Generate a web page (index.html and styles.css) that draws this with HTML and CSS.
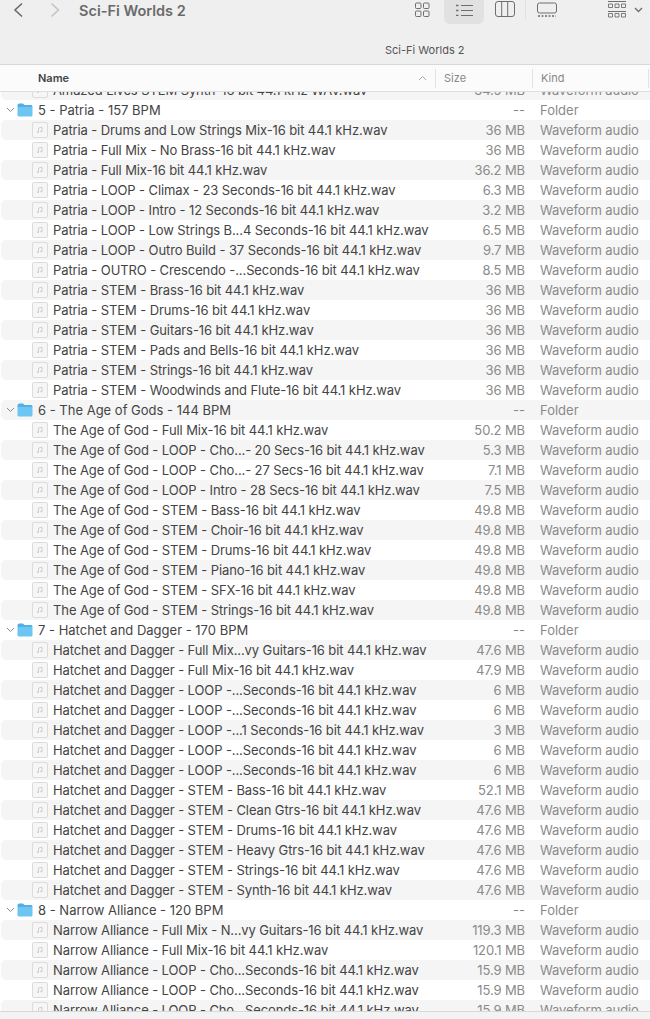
FILE: index.html
```html
<!DOCTYPE html>
<html>
<head>
    <title>Sci-Fi Worlds 2</title>
    <link rel="stylesheet" href="styles.css">
</head>
<body>
    <svg class="defs" width="0" height="0">
        <symbol id="wav" viewBox="0 0 16 16">
            <rect x="0.5" y="0.5" width="15" height="15" rx="1.5" fill="#f6f6f6" stroke="#dcdcdc"/>
            <path d="M6.5 10V6l3.5-.8v4" fill="none" stroke="#cccccc" stroke-width="0.9"/>
            <circle cx="5.8" cy="10.2" r="0.9" fill="#cccccc"/>
            <circle cx="9.3" cy="9.4" r="0.9" fill="#cccccc"/>
        </symbol>
        <symbol id="folder" viewBox="0 0 16 14">
            <path d="M0.5 2.5Q0.5 0.5 2.5 0.5H6L7.5 2H14Q15.5 2 15.5 3.5V4H0.5Z" fill="#4fb0e6"/>
            <path d="M0.5 4H15.5V12Q15.5 13.5 14 13.5H2Q0.5 13.5 0.5 12Z" fill="#6cc5f3"/>
        </symbol>
    </svg>

    <div class="window">
        <div class="toolbar">
            <div class="nav">
                <svg class="chev" width="12" height="18" viewBox="0 0 12 18"><path d="M10 2.5L3 9l7 6.5" fill="none" stroke="#6a6a6a" stroke-width="1.6"/></svg>
                <svg class="chev" width="12" height="18" viewBox="0 0 12 18"><path d="M2.5 2.5L9.5 9l-7 6.5" fill="none" stroke="#c4c4c4" stroke-width="1.6"/></svg>
                <div class="win-title">Sci-Fi Worlds 2</div>
            </div>
            <div class="views">
                <div class="view-btn">
                    <svg width="18" height="17" viewBox="0 0 18 17" fill="none" stroke="#6e6e6e"><rect x="2.5" y="2" width="5.5" height="5.5" rx="1"/><rect x="10.5" y="2" width="5.5" height="5.5" rx="1"/><rect x="2.5" y="10" width="5.5" height="5.5" rx="1"/><rect x="10.5" y="10" width="5.5" height="5.5" rx="1"/></svg>
                </div>
                <div class="view-btn active">
                    <svg width="20" height="14" viewBox="0 0 20 14" fill="none" stroke="#6e6e6e"><path d="M7 3.5H19M7 8.5H19M7 13.5H19"/><path d="M2 3.5h2.5M2 8.5h2.5M2 13.5h2.5" stroke-width="1.5"/></svg>
                </div>
                <div class="view-btn">
                    <svg width="20" height="16" viewBox="0 0 20 16" fill="none" stroke="#6e6e6e"><rect x="0.5" y="0.5" width="19" height="15" rx="2.5"/><path d="M6.7 0.5V15.5M12.7 0.5V15.5"/></svg>
                </div>
                <div class="divider"></div>
                <div class="view-btn">
                    <svg width="20" height="17" viewBox="0 0 20 17" fill="none" stroke="#6e6e6e"><rect x="0.5" y="2" width="19" height="10" rx="2"/><path d="M1 15h18" stroke-dasharray="2 1.5" stroke-width="1.5"/></svg>
                </div>
                <div class="group-btn">
                    <svg width="18" height="18" viewBox="0 0 18 18" fill="none" stroke="#6e6e6e"><path d="M0 1.5H18M0 11.5H18"/><path d="M0.5 4h4v3.5h-4zM7 4h4v3.5H7zM13.5 4h4v3.5h-4zM0.5 13.5h4V17h-4zM7 13.5h4V17H7zM13.5 13.5h4V17h-4z" stroke-width="0.9"/></svg>
                    <svg class="group-caret" width="9" height="6" viewBox="0 0 9 6"><path d="M1 1l3.5 3.5L8 1" fill="none" stroke="#6e6e6e" stroke-width="1.4"/></svg>
                </div>
            </div>
        </div>
        <div class="path-title">Sci-Fi Worlds 2</div>

        <div class="col-head">
            <div class="head-name">Name</div>
            <svg class="sort" width="9" height="6" viewBox="0 0 9 6"><path d="M1 5l3.5-3.5L8 5" fill="none" stroke="#a8a8a8" stroke-width="1"/></svg>
            <div class="head-size">Size</div>
            <div class="head-kind">Kind</div>
        </div>

        <div class="list">
            <div class="list-inner">
                <div class="row"><svg class="ficon"><use href="#wav"/></svg><div class="name">Amazed Lives STEM Synth-16 bit 44.1 kHz WAV.wav</div><div class="size">34.5 MB</div><div class="kind">Waveform audio</div></div>
                <div class="row folder"><svg class="tw" width="9" height="6" viewBox="0 0 9 6"><path d="M1 1l3.5 3.5L8 1" fill="none" stroke="#8c8c8c" stroke-width="1"/></svg><svg class="dicon"><use href="#folder"/></svg><div class="name">5 - Patria - 157 BPM</div><div class="size">--</div><div class="kind">Folder</div></div>
                <div class="row"><svg class="ficon"><use href="#wav"/></svg><div class="name">Patria - Drums and Low Strings Mix-16 bit 44.1 kHz.wav</div><div class="size">36 MB</div><div class="kind">Waveform audio</div></div>
                <div class="row"><svg class="ficon"><use href="#wav"/></svg><div class="name">Patria - Full Mix - No Brass-16 bit 44.1 kHz.wav</div><div class="size">36 MB</div><div class="kind">Waveform audio</div></div>
                <div class="row"><svg class="ficon"><use href="#wav"/></svg><div class="name">Patria - Full Mix-16 bit 44.1 kHz.wav</div><div class="size">36.2 MB</div><div class="kind">Waveform audio</div></div>
                <div class="row"><svg class="ficon"><use href="#wav"/></svg><div class="name">Patria - LOOP - Climax - 23 Seconds-16 bit 44.1 kHz.wav</div><div class="size">6.3 MB</div><div class="kind">Waveform audio</div></div>
                <div class="row"><svg class="ficon"><use href="#wav"/></svg><div class="name">Patria - LOOP - Intro - 12 Seconds-16 bit 44.1 kHz.wav</div><div class="size">3.2 MB</div><div class="kind">Waveform audio</div></div>
                <div class="row"><svg class="ficon"><use href="#wav"/></svg><div class="name">Patria - LOOP - Low Strings B...4 Seconds-16 bit 44.1 kHz.wav</div><div class="size">6.5 MB</div><div class="kind">Waveform audio</div></div>
                <div class="row"><svg class="ficon"><use href="#wav"/></svg><div class="name">Patria - LOOP - Outro Build - 37 Seconds-16 bit 44.1 kHz.wav</div><div class="size">9.7 MB</div><div class="kind">Waveform audio</div></div>
                <div class="row"><svg class="ficon"><use href="#wav"/></svg><div class="name">Patria - OUTRO - Crescendo -...Seconds-16 bit 44.1 kHz.wav</div><div class="size">8.5 MB</div><div class="kind">Waveform audio</div></div>
                <div class="row"><svg class="ficon"><use href="#wav"/></svg><div class="name">Patria - STEM - Brass-16 bit 44.1 kHz.wav</div><div class="size">36 MB</div><div class="kind">Waveform audio</div></div>
                <div class="row"><svg class="ficon"><use href="#wav"/></svg><div class="name">Patria - STEM - Drums-16 bit 44.1 kHz.wav</div><div class="size">36 MB</div><div class="kind">Waveform audio</div></div>
                <div class="row"><svg class="ficon"><use href="#wav"/></svg><div class="name">Patria - STEM - Guitars-16 bit 44.1 kHz.wav</div><div class="size">36 MB</div><div class="kind">Waveform audio</div></div>
                <div class="row"><svg class="ficon"><use href="#wav"/></svg><div class="name">Patria - STEM - Pads and Bells-16 bit 44.1 kHz.wav</div><div class="size">36 MB</div><div class="kind">Waveform audio</div></div>
                <div class="row"><svg class="ficon"><use href="#wav"/></svg><div class="name">Patria - STEM - Strings-16 bit 44.1 kHz.wav</div><div class="size">36 MB</div><div class="kind">Waveform audio</div></div>
                <div class="row"><svg class="ficon"><use href="#wav"/></svg><div class="name">Patria - STEM - Woodwinds and Flute-16 bit 44.1 kHz.wav</div><div class="size">36 MB</div><div class="kind">Waveform audio</div></div>
                <div class="row folder"><svg class="tw" width="9" height="6" viewBox="0 0 9 6"><path d="M1 1l3.5 3.5L8 1" fill="none" stroke="#8c8c8c" stroke-width="1"/></svg><svg class="dicon"><use href="#folder"/></svg><div class="name">6 - The Age of Gods - 144 BPM</div><div class="size">--</div><div class="kind">Folder</div></div>
                <div class="row"><svg class="ficon"><use href="#wav"/></svg><div class="name">The Age of God - Full Mix-16 bit 44.1 kHz.wav</div><div class="size">50.2 MB</div><div class="kind">Waveform audio</div></div>
                <div class="row"><svg class="ficon"><use href="#wav"/></svg><div class="name">The Age of God - LOOP - Cho...- 20 Secs-16 bit 44.1 kHz.wav</div><div class="size">5.3 MB</div><div class="kind">Waveform audio</div></div>
                <div class="row"><svg class="ficon"><use href="#wav"/></svg><div class="name">The Age of God - LOOP - Cho...- 27 Secs-16 bit 44.1 kHz.wav</div><div class="size">7.1 MB</div><div class="kind">Waveform audio</div></div>
                <div class="row"><svg class="ficon"><use href="#wav"/></svg><div class="name">The Age of God - LOOP - Intro - 28 Secs-16 bit 44.1 kHz.wav</div><div class="size">7.5 MB</div><div class="kind">Waveform audio</div></div>
                <div class="row"><svg class="ficon"><use href="#wav"/></svg><div class="name">The Age of God - STEM - Bass-16 bit 44.1 kHz.wav</div><div class="size">49.8 MB</div><div class="kind">Waveform audio</div></div>
                <div class="row"><svg class="ficon"><use href="#wav"/></svg><div class="name">The Age of God - STEM - Choir-16 bit 44.1 kHz.wav</div><div class="size">49.8 MB</div><div class="kind">Waveform audio</div></div>
                <div class="row"><svg class="ficon"><use href="#wav"/></svg><div class="name">The Age of God - STEM - Drums-16 bit 44.1 kHz.wav</div><div class="size">49.8 MB</div><div class="kind">Waveform audio</div></div>
                <div class="row"><svg class="ficon"><use href="#wav"/></svg><div class="name">The Age of God - STEM - Piano-16 bit 44.1 kHz.wav</div><div class="size">49.8 MB</div><div class="kind">Waveform audio</div></div>
                <div class="row"><svg class="ficon"><use href="#wav"/></svg><div class="name">The Age of God - STEM - SFX-16 bit 44.1 kHz.wav</div><div class="size">49.8 MB</div><div class="kind">Waveform audio</div></div>
                <div class="row"><svg class="ficon"><use href="#wav"/></svg><div class="name">The Age of God - STEM - Strings-16 bit 44.1 kHz.wav</div><div class="size">49.8 MB</div><div class="kind">Waveform audio</div></div>
                <div class="row folder"><svg class="tw" width="9" height="6" viewBox="0 0 9 6"><path d="M1 1l3.5 3.5L8 1" fill="none" stroke="#8c8c8c" stroke-width="1"/></svg><svg class="dicon"><use href="#folder"/></svg><div class="name">7 - Hatchet and Dagger - 170 BPM</div><div class="size">--</div><div class="kind">Folder</div></div>
                <div class="row"><svg class="ficon"><use href="#wav"/></svg><div class="name">Hatchet and Dagger - Full Mix...vy Guitars-16 bit 44.1 kHz.wav</div><div class="size">47.6 MB</div><div class="kind">Waveform audio</div></div>
                <div class="row"><svg class="ficon"><use href="#wav"/></svg><div class="name">Hatchet and Dagger - Full Mix-16 bit 44.1 kHz.wav</div><div class="size">47.9 MB</div><div class="kind">Waveform audio</div></div>
                <div class="row"><svg class="ficon"><use href="#wav"/></svg><div class="name">Hatchet and Dagger - LOOP -...Seconds-16 bit 44.1 kHz.wav</div><div class="size">6 MB</div><div class="kind">Waveform audio</div></div>
                <div class="row"><svg class="ficon"><use href="#wav"/></svg><div class="name">Hatchet and Dagger - LOOP -...Seconds-16 bit 44.1 kHz.wav</div><div class="size">6 MB</div><div class="kind">Waveform audio</div></div>
                <div class="row"><svg class="ficon"><use href="#wav"/></svg><div class="name">Hatchet and Dagger - LOOP -...1 Seconds-16 bit 44.1 kHz.wav</div><div class="size">3 MB</div><div class="kind">Waveform audio</div></div>
                <div class="row"><svg class="ficon"><use href="#wav"/></svg><div class="name">Hatchet and Dagger - LOOP -...Seconds-16 bit 44.1 kHz.wav</div><div class="size">6 MB</div><div class="kind">Waveform audio</div></div>
                <div class="row"><svg class="ficon"><use href="#wav"/></svg><div class="name">Hatchet and Dagger - LOOP -...Seconds-16 bit 44.1 kHz.wav</div><div class="size">6 MB</div><div class="kind">Waveform audio</div></div>
                <div class="row"><svg class="ficon"><use href="#wav"/></svg><div class="name">Hatchet and Dagger - STEM - Bass-16 bit 44.1 kHz.wav</div><div class="size">52.1 MB</div><div class="kind">Waveform audio</div></div>
                <div class="row"><svg class="ficon"><use href="#wav"/></svg><div class="name">Hatchet and Dagger - STEM - Clean Gtrs-16 bit 44.1 kHz.wav</div><div class="size">47.6 MB</div><div class="kind">Waveform audio</div></div>
                <div class="row"><svg class="ficon"><use href="#wav"/></svg><div class="name">Hatchet and Dagger - STEM - Drums-16 bit 44.1 kHz.wav</div><div class="size">47.6 MB</div><div class="kind">Waveform audio</div></div>
                <div class="row"><svg class="ficon"><use href="#wav"/></svg><div class="name">Hatchet and Dagger - STEM - Heavy Gtrs-16 bit 44.1 kHz.wav</div><div class="size">47.6 MB</div><div class="kind">Waveform audio</div></div>
                <div class="row"><svg class="ficon"><use href="#wav"/></svg><div class="name">Hatchet and Dagger - STEM - Strings-16 bit 44.1 kHz.wav</div><div class="size">47.6 MB</div><div class="kind">Waveform audio</div></div>
                <div class="row"><svg class="ficon"><use href="#wav"/></svg><div class="name">Hatchet and Dagger - STEM - Synth-16 bit 44.1 kHz.wav</div><div class="size">47.6 MB</div><div class="kind">Waveform audio</div></div>
                <div class="row folder"><svg class="tw" width="9" height="6" viewBox="0 0 9 6"><path d="M1 1l3.5 3.5L8 1" fill="none" stroke="#8c8c8c" stroke-width="1"/></svg><svg class="dicon"><use href="#folder"/></svg><div class="name">8 - Narrow Alliance - 120 BPM</div><div class="size">--</div><div class="kind">Folder</div></div>
                <div class="row"><svg class="ficon"><use href="#wav"/></svg><div class="name">Narrow Alliance - Full Mix - N...vy Guitars-16 bit 44.1 kHz.wav</div><div class="size">119.3 MB</div><div class="kind">Waveform audio</div></div>
                <div class="row"><svg class="ficon"><use href="#wav"/></svg><div class="name">Narrow Alliance - Full Mix-16 bit 44.1 kHz.wav</div><div class="size">120.1 MB</div><div class="kind">Waveform audio</div></div>
                <div class="row"><svg class="ficon"><use href="#wav"/></svg><div class="name">Narrow Alliance - LOOP - Cho...Seconds-16 bit 44.1 kHz.wav</div><div class="size">15.9 MB</div><div class="kind">Waveform audio</div></div>
                <div class="row"><svg class="ficon"><use href="#wav"/></svg><div class="name">Narrow Alliance - LOOP - Cho...Seconds-16 bit 44.1 kHz.wav</div><div class="size">15.9 MB</div><div class="kind">Waveform audio</div></div>
                <div class="row"><svg class="ficon"><use href="#wav"/></svg><div class="name">Narrow Alliance - LOOP - Cho...Seconds-16 bit 44.1 kHz.wav</div><div class="size">15.9 MB</div><div class="kind">Waveform audio</div></div>
            </div>
        </div>
        <div class="bottom"></div>
    </div>
</body>
</html>
```
FILE: styles.css
```css
* {
    box-sizing: border-box;
}
html, body {
    margin: 0;
    height: 100%;
}
body {
    font-family: 'Inter', 'Liberation Sans', sans-serif;
    font-size: 13px;
    background: #fff;
    color: #444;
    overflow: hidden;
}
.defs {
    position: absolute;
}
.window {
    display: flex;
    flex-direction: column;
    height: 1019px;
}
.toolbar {
    height: 40px;
    background: #efefef;
    display: flex;
    justify-content: space-between;
    align-items: flex-start;
}
.nav {
    display: flex;
    align-items: center;
    height: 20px;
    padding-left: 12px;
}
.chev + .chev {
    margin-left: 25px;
}
.win-title {
    font-size: 14.5px;
    font-weight: 600;
    color: #6a6a6a;
    margin-left: 18px;
}
.views {
    display: flex;
    align-items: flex-start;
    gap: 1px;
    padding-right: 7px;
}
.view-btn {
    width: 40px;
    height: 24px;
    border-radius: 0 0 6px 6px;
    display: flex;
    align-items: center;
    justify-content: center;
    padding-bottom: 6px;
}
.view-btn.active {
    background: #e1e1e1;
    margin-left: 1px;
}
.divider {
    width: 1px;
    height: 20px;
    background: #e0e0e0;
    margin-left: -1px;
}
.group-btn {
    display: flex;
    align-items: center;
    gap: 8px;
    height: 18px;
    margin-left: 40px;
}
.group-caret {
    margin-top: 2px;
}
.path-title {
    height: 25px;
    background: #efefef;
    border-bottom: 1px solid #d8d8d8;
    font-size: 11px;
    color: #555;
    padding-left: 385px;
    line-height: 20px;
}
.col-head {
    height: 27px;
    background: #fbfbfb;
    border-bottom: 1px solid #dfdfdf;
    display: flex;
    align-items: center;
    font-size: 11px;
    color: #888;
}
.head-name {
    width: 372px;
    padding-left: 38px;
    font-weight: 600;
    color: #444;
}
.sort {
    margin: 0 8px 0 46px;
}
.head-size {
    width: 97px;
    height: 19px;
    line-height: 19px;
    padding-left: 8px;
    border-left: 1px solid #e2e2e2;
}
.head-kind {
    width: 117px;
    height: 19px;
    line-height: 19px;
    padding-left: 8px;
    border-left: 1px solid #e2e2e2;
    border-right: 1px solid #e2e2e2;
}
.list {
    flex: 1;
    overflow: hidden;
    background: #fff;
}
.list-inner {
    margin-top: -12px;
}
.row {
    height: 20px;
    margin-left: 1px;
    display: flex;
    align-items: center;
    border-radius: 5px 0 0 5px;
    white-space: nowrap;
    letter-spacing: -0.1px;
}
.row.folder {
    letter-spacing: 0;
}
.row:nth-child(odd) {
    background: #f5f5f5;
}
.ficon {
    width: 16px;
    height: 16px;
    margin-left: 31px;
    flex: none;
}
.tw {
    margin-left: 5px;
    flex: none;
}
.dicon {
    width: 16px;
    height: 14px;
    margin-left: 2px;
    flex: none;
}
.name {
    width: 418px;
    margin-left: 5px;
    overflow: hidden;
    flex: none;
}
.folder .name {
    width: 433px;
}
.size {
    width: 54px;
    text-align: right;
    color: #8a8a8a;
    flex: none;
}
.kind {
    margin-left: 15px;
    color: #8a8a8a;
}
.bottom {
    height: 8px;
    background: #f3f3f3;
    border-top: 1px solid #d8d8d8;
}
```
